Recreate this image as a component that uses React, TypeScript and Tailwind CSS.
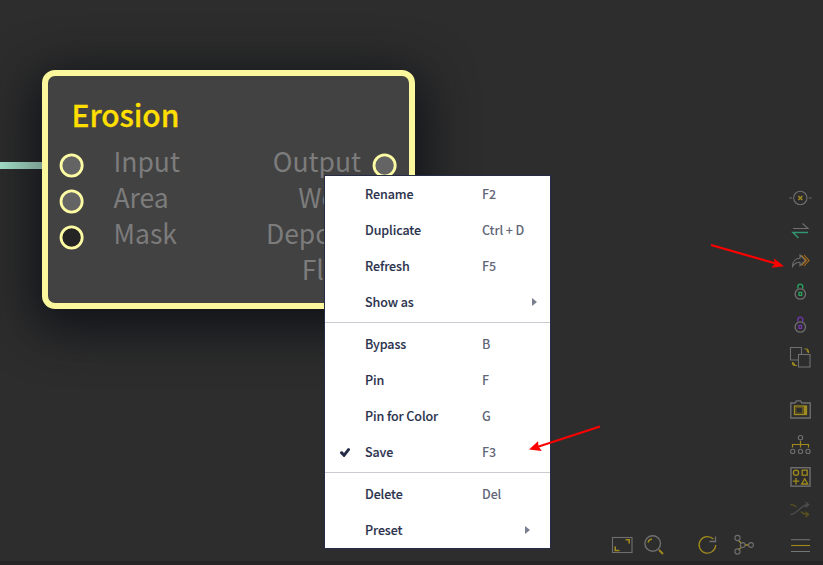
import type { ReactNode } from "react";

const FONT = "font-['Noto_Sans_CJK_SC','Noto_Sans',sans-serif]";
const GRAY = "#6f6f6f";
const GOLD = "#a08a1e";

function Icon({ children, className = "" }: { children: ReactNode; className?: string }) {
  return (
    <svg
      viewBox="0 0 24 24"
      fill="none"
      stroke={GRAY}
      strokeWidth="1.1"
      className={`block h-6 w-6 shrink-0 ${className}`}
    >
      {children}
    </svg>
  );
}

type Item = { label: string; shortcut?: string; checked?: boolean; arrow?: string };

const groups: Item[][] = [
  [
    { label: "Rename", shortcut: "F2" },
    { label: "Duplicate", shortcut: "Ctrl + D" },
    { label: "Refresh", shortcut: "F5" },
    { label: "Show as", arrow: "mr-[13px]" },
  ],
  [
    { label: "Bypass", shortcut: "B" },
    { label: "Pin", shortcut: "F" },
    { label: "Pin for Color", shortcut: "G" },
    { label: "Save", shortcut: "F3", checked: true },
  ],
  [
    { label: "Delete", shortcut: "Del" },
    { label: "Preset", arrow: "mr-5" },
  ],
];

const groupStyles = [
  "pb-[2px]",
  "border-t border-[#cacbd1] pt-[3px] pb-[2px]",
  "border-t border-[#cacbd1] pt-[3px]",
];

function MenuItem({ label, shortcut, checked, arrow }: Item) {
  return (
    <li className="flex h-9 items-center">
      <span className="flex w-10 shrink-0 justify-center">
        {checked && (
          <svg viewBox="0 0 10 9" className="h-[9px] w-[10px]" fill="#252c47">
            <path d="M0 4 L2 3 L4 5 L8 0 L10 .8 V2 L4.6 9 H3.6 L0 5.2 Z" />
          </svg>
        )}
      </span>
      <span className="w-[117px] shrink-0 font-medium text-[#2b324d] [-webkit-text-stroke:0.1px_#2b324d]">{label}</span>
      <span className="grow font-medium text-[#626678]">{shortcut}</span>
      {arrow && (
        <svg viewBox="0 0 5 8" className={`h-2 w-[5px] ${arrow}`} fill="#7b7f8f">
          <path d="M0 0 L5 4 L0 8 Z" />
        </svg>
      )}
    </li>
  );
}

function ContextMenu() {
  return (
    <div className="absolute top-[175px] left-[324px] w-[227px] border border-[#252c47] bg-white text-[12.5px] leading-[18px] tracking-[-0.1px]">
      {groups.map((items, i) => (
        <ul key={i} className={groupStyles[i]}>
          {items.map((item) => (
            <MenuItem key={item.label} {...item} />
          ))}
        </ul>
      ))}
    </div>
  );
}

function Port({ fill }: { fill: string }) {
  return (
    <svg viewBox="0 0 24 24" className="h-6 w-6 shrink-0 overflow-visible">
      <circle cx="11.6" cy="12.5" r="10.6" fill={fill} stroke="#fdfba4" strokeWidth="2.8" />
    </svg>
  );
}

const rows = [
  { input: "Input", output: "Output", fill: "#646464" },
  { input: "Area", output: "Wear", fill: "#646464" },
  { input: "Mask", output: "Deposit", fill: "#242424" },
  { input: "", output: "Flow", fill: "" },
];

function ErosionNode() {
  return (
    <div className="absolute top-[70px] left-[42px] h-[239px] w-[373px] rounded-[13px] border-[6px] border-[#faf79c] bg-[#424242] pt-[20px] pr-3 pl-3 shadow-[0_12px_50px_8px_#101217]">
      <h1 className="pl-[11.5px] text-[30px] leading-9 font-medium tracking-[-0.1px] text-[#ffdf00] [-webkit-text-stroke:0.3px_#ffdf00]">
        Erosion
      </h1>
      <ul className="mt-[13px] text-[26.5px] leading-9 text-[#7c7c7c]">
        {rows.map((row) => (
          <li key={row.output} className="flex h-9 items-center">
            <span className="w-[53.5px] pt-1">{row.fill && <Port fill={row.fill} />}</span>
            <span className="-mt-[4px] grow">{row.input}</span>
            <span className="-mt-[4px] mr-3">{row.output}</span>
            <span className="pt-1">
              <Port fill="#646464" />
            </span>
          </li>
        ))}
      </ul>
    </div>
  );
}

function Lock({ color, className }: { color: string; className: string }) {
  return (
    <Icon className={className}>
      <path d="M9.9 8.8 V6.5 a2.4 2.4 0 0 1 4.8 0 V8.8" stroke={color} strokeWidth="1.4" />
      <circle cx="12.3" cy="14" r="5.2" strokeWidth="1.3" />
      <rect x="11" y="12.4" width="2.6" height="3" stroke={color} strokeWidth="1.3" />
    </Icon>
  );
}

function SideToolbar() {
  return (
    <aside className="flex w-6 flex-col pt-[186px]">
      <Icon>
        <circle cx="12.3" cy="12" r="6.7" />
        <path d="M1.2 12 H4 M20.8 12 H23.5" />
        <path d="M10.3 10 l4 4 m0 -4 l-4 4" stroke={GOLD} strokeWidth="1.5" />
      </Icon>
      <Icon className="mt-[9px]">
        <path d="M5 9.5 H20 L14.5 4.5" />
        <path d="M20 13.5 H5 L10.5 19" stroke="#319570" strokeWidth="1.5" />
      </Icon>
      <Icon className="mt-[6px]">
        <path d="M4.5 17.5 C4.5 12 8 9.3 12 9.3 V5.8 L17.5 11.5 L12 16.5 V13.3 C8.5 13 6.5 14.5 4.5 17.5 Z" />
        <path d="M16 6 L21 11.5 L16 17 M13.5 6.3 L18.5 11.5 L13.5 16.7" stroke="#a86c1a" />
      </Icon>
      <Lock color="#29a25c" className="mt-[7px]" />
      <Lock color="#7136a8" className="mt-[9px]" />
      <Icon className="mt-[8px]">
        <path d="M10.5 15 H2.5 V2.5 H13.5 V9" />
        <rect x="10.5" y="9.5" width="11.5" height="12.5" />
        <path d="M16.5 4 h2.5 l1.5 2 v2 M18.7 5.5 l1.8 2.2 M4.5 17 v2 l1.5 1.5 h3 M5 17.5 l2 2.3" stroke={GOLD} />
      </Icon>
      <Icon className="mt-[29px]">
        <path d="M2.8 5 H7 L8.5 2.9 H12.5 L14 5 H22.2 V20 H2.8 Z" strokeWidth="1.4" />
        <rect x="6.5" y="8" width="12" height="8.5" stroke={GOLD} strokeWidth="1.3" />
        <rect x="7.9" y="9.4" width="6.6" height="5.7" stroke="#65591f" strokeWidth="1" />
        <path d="M16.8 8 V16.5" stroke={GOLD} strokeWidth="2.4" />
      </Icon>
      <Icon className="mt-[11px]">
        <circle cx="12.5" cy="4.7" r="2.2" />
        <path d="M12.5 8 V14.5 M4.5 14.5 V11.5 H20.5 V14.5" stroke={GOLD} strokeWidth="1.2" />
        <circle cx="4.7" cy="18.4" r="2.1" />
        <circle cx="12.5" cy="18.4" r="2.1" />
        <circle cx="20" cy="18.4" r="2.1" />
      </Icon>
      <Icon className="mt-[8px]">
        <rect x="3" y="2.7" width="19" height="18.5" strokeWidth="1.4" />
        <g stroke={GOLD} strokeWidth="1.3">
          <circle cx="8" cy="7.7" r="2.6" />
          <rect x="14.2" y="5.2" width="5" height="5" />
          <path d="M8 13 v6.5 M4.8 16.2 h6.4 M16.7 13.7 l3 5.3 h-6 Z" />
        </g>
      </Icon>
      <Icon className="mt-[9px]">
        <path d="M2.5 16.5 C9 16.5 13 6.5 20.5 6.5 M17.5 4 L20.7 6.5 L17.5 9.5" stroke="#4c4c4c" strokeWidth="1.3" />
        <path d="M2.5 6.5 C5 6.5 7 7.5 8.5 9 M13 13.5 C15 16 17.5 16.5 20.5 16.5 M17.5 13.7 L20.7 16.5 L17.5 19.3" stroke="#5a5020" strokeWidth="1.3" />
      </Icon>
      <Icon className="mt-[12px]">
        <path d="M3 5.8 H22 M3 17.5 H22" stroke="#777777" />
        <path d="M3 11.5 H22" stroke={GOLD} />
      </Icon>
    </aside>
  );
}

function BottomToolbar() {
  return (
    <nav className="mr-[33px] mb-2 flex items-center self-end">
      <Icon>
        <rect x="2.5" y="4.5" width="19.5" height="15" />
        <path d="M15.5 6.8 H19.2 V10.5 M5.2 13.5 V17.5 H9.5" stroke={GOLD} strokeWidth="1.6" />
      </Icon>
      <Icon className="ml-[8px]">
        <circle cx="10.7" cy="10.5" r="7.8" strokeWidth="1.4" />
        <path d="M6 9.5 C6.5 7.4 8 6.2 10 6" stroke={GOLD} strokeWidth="1.4" />
        <path d="M17 17 L21 21" stroke={GOLD} strokeWidth="1.9" />
      </Icon>
      <Icon className="ml-[29px]">
        <path d="M18.3 6 A8.3 8.3 0 1 0 20.7 12" stroke={GOLD} strokeWidth="1.3" />
        <path d="M20.5 3.5 V8.5 H14.5" strokeWidth="1.3" />
      </Icon>
      <Icon className="ml-[12px]">
        <path d="M7.5 7.5 L10 10 M7.5 17 L10 14.5 M14 12 H17.5" stroke={GOLD} strokeWidth="1.4" />
        <circle cx="6.5" cy="5" r="2.6" />
        <circle cx="6.5" cy="18.5" r="2.6" />
        <circle cx="11.7" cy="12" r="2.4" />
        <circle cx="20" cy="12" r="2.4" />
      </Icon>
    </nav>
  );
}

function Arrows() {
  return (
    <svg className="pointer-events-none absolute inset-0 h-full w-full" viewBox="0 0 823 565">
      <g fill="#fe0000" stroke="#fe0000">
        <path d="M711 245 L775 263.3" strokeWidth="2.2" />
        <path d="M784 266.2 L771.5 267.8 L775 263.5 L773.7 258.2 Z" stroke="none" />
        <path d="M600 426.5 L538 446.8" strokeWidth="2.2" />
        <path d="M529 449.5 L538 441.2 L538.5 446.6 L541.8 451 Z" stroke="none" />
      </g>
    </svg>
  );
}

export default function App() {
  return (
    <main className={`relative flex h-[565px] w-[823px] justify-end overflow-hidden bg-[#2d2d2d] pr-[11px] ${FONT}`}>
      <ErosionNode />
      <div className="absolute top-[162px] left-0 h-[7px] w-[42px] bg-linear-to-r from-[#9ed9c2] to-[#7a9f92]" />
      <BottomToolbar />
      <SideToolbar />
      <ContextMenu />
      <Arrows />
      <div className="absolute inset-x-0 bottom-0 h-1 bg-[#262424]" />
    </main>
  );
}
